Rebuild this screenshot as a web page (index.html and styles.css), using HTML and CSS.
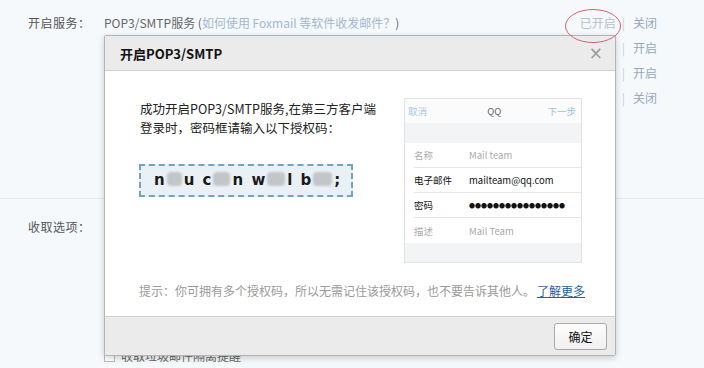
FILE: index.html
```html
<!DOCTYPE html>
<html lang="zh-CN">
<head>
<meta charset="utf-8">
<title>开启POP3/SMTP</title>
<link rel="stylesheet" href="styles.css">
</head>
<body>
<div class="page">
  <section class="services">
    <div class="label">开启服务：</div>
    <div class="service-list">
      <div class="service-row">
        <div class="service-name">POP3/SMTP服务 (<a class="help" href="#">如何使用 Foxmail 等软件收发邮件？</a>)</div>
        <div class="actions"><span class="status">已开启</span><span class="sep">|</span><a class="act" href="#">关闭</a></div>
      </div>
      <div class="service-row">
        <div class="service-name"></div>
        <div class="actions"><span class="status"></span><span class="sep">|</span><a class="act" href="#">开启</a></div>
      </div>
      <div class="service-row">
        <div class="service-name"></div>
        <div class="actions"><span class="status"></span><span class="sep">|</span><a class="act" href="#">开启</a></div>
      </div>
      <div class="service-row">
        <div class="service-name"></div>
        <div class="actions"><span class="status"></span><span class="sep">|</span><a class="act" href="#">关闭</a></div>
      </div>
    </div>
  </section>
  <section class="receive">
    <div class="label">收取选项：</div>
    <div class="receive-list">
      <div class="check-row"><span class="box"></span>收取垃圾邮件隔离提醒</div>
    </div>
  </section>
</div>

<svg class="mark" width="60" height="36" viewBox="0 0 60 36"><ellipse cx="29" cy="18" rx="27.5" ry="16.5" fill="none" stroke="#d9606c" stroke-width="1"/></svg>

<div class="dialog">
  <div class="dlg-head">
    <span class="dlg-title">开启POP3/SMTP</span>
    <span class="dlg-close">×</span>
  </div>
  <div class="dlg-body">
    <div class="dlg-main">
      <div class="dlg-text">
        <p class="intro">成功开启POP3/SMTP服务,在第三方客户端<br>登录时，密码框请输入以下授权码：</p>
        <div class="code">n<span class="blur b1"></span>u c<span class="blur b2"></span>n w<span class="blur b3"></span>l b<span class="blur b4"></span>;</div>
      </div>
      <div class="phone">
        <div class="ph-bar"><span class="ph-cancel">取消</span><span class="ph-title">QQ</span><span class="ph-next">下一步</span></div>
        <div class="ph-band"></div>
        <div class="ph-rows">
          <div class="ph-row dim"><span class="k">名称</span><span class="v">Mail team</span></div>
          <div class="ph-row"><span class="k">电子邮件</span><span class="v">mailteam@qq.com</span></div>
          <div class="ph-row"><span class="k">密码</span><span class="v dots">●●●●●●●●●●●●●●●●</span></div>
          <div class="ph-row dim last"><span class="k">描述</span><span class="v">Mail Team</span></div>
        </div>
        <div class="ph-band bottom"></div>
      </div>
    </div>
    <p class="tip">提示：你可拥有多个授权码，所以无需记住该授权码，也不要告诉其他人。<a class="more" href="#">了解更多</a></p>
  </div>
  <div class="dlg-foot">
    <button class="ok">确定</button>
  </div>
</div>
</body>
</html>
```

FILE: styles.css
```css
* { box-sizing: border-box; }
html, body { margin: 0; padding: 0; }
body {
  width: 704px;
  height: 368px;
  overflow: hidden;
  background: #f5f9fc;
  font-family: "Noto Sans CJK SC", "Noto Sans", sans-serif;
  font-size: 12px;
  color: #555;
  position: relative;
}
a { text-decoration: none; }
p { margin: 0; }

.page { padding-left: 28px; }

.services {
  display: flex;
  padding-top: 10px;
  height: 199px;
  border-bottom: 1px solid #e4e9ee;
  margin-left: -28px;
  padding-left: 28px;
}
.label {
  width: 76px;
  line-height: 25px;
  color: #555;
  letter-spacing: 0.5px;
}
.service-list { width: 553px; }
.service-row {
  display: flex;
  justify-content: space-between;
  height: 25px;
  line-height: 25px;
}
.service-name { color: #666; }
.help { color: #a3b7cf; }
.actions { display: flex; }
.status { width: 36px; text-align: right; color: #b8c0c9; }
.sep { color: #c9d0d8; margin: 0 8px 0 6px; }
.act { color: #97a8ba; width: 24px; }

.receive {
  display: flex;
  padding-top: 15px;
}
.receive-list { padding-top: 134px; }
.check-row {
  display: flex;
  align-items: center;
  line-height: 16px;
  color: #666;
}
.box {
  width: 11px;
  height: 11px;
  border: 1px solid #bbb;
  background: #fff;
  margin-right: 6px;
}

.mark {
  position: absolute;
  left: 564px;
  top: 8px;
  z-index: 3;
}

.dialog {
  position: absolute;
  left: 104px;
  top: 35px;
  width: 512px;
  height: 321px;
  border: 1px solid #b3b3b3;
  border-radius: 2px;
  background: #fff;
  box-shadow: 0 2px 6px rgba(0,0,0,0.18);
  display: flex;
  flex-direction: column;
  z-index: 2;
}
.dlg-head {
  height: 35px;
  background: #ebebeb;
  border-bottom: 1px solid #cfcfcf;
  display: flex;
  align-items: center;
  justify-content: space-between;
  padding: 0 12px 0 15px;
}
.dlg-title {
  font-weight: bold;
  font-size: 13px;
  color: #111;
}
.dlg-close {
  font-family: "DejaVu Sans", sans-serif;
  font-size: 17px;
  color: #999;
  line-height: 1;
}
.dlg-body {
  flex: 1;
  padding: 28px 0 0 35px;
}
.dlg-main { display: flex; }
.dlg-text { width: 264px; }
.intro {
  font-size: 12.5px;
  line-height: 19px;
  color: #222;
}
.code {
  margin-top: 27px;
  margin-left: -1px;
  width: 214px;
  height: 33px;
  border: 2px dashed #6fa5bd;
  background: #e9f1f6;
  font-family: "DejaVu Sans", sans-serif;
  font-weight: bold;
  font-size: 15px;
  color: #1a1a1a;
  line-height: 29px;
  padding-left: 13px;
  white-space: nowrap;
  word-spacing: 3px;
}
.blur {
  display: inline-block;
  height: 14px;
  background: #c3c6c9;
  border-radius: 4px;
  vertical-align: -1px;
  filter: blur(1px);
  margin: 0 2px;
}
.b1 { width: 15px; }
.b2 { width: 17px; }
.b3 { width: 18px; }
.b4 { width: 19px; }

.phone {
  margin-top: -1px;
  width: 178px;
  height: 165px;
  border: 1px solid #e2e2e2;
  background: #fff;
  font-size: 9.5px;
}
.ph-bar {
  height: 24px;
  display: flex;
  align-items: center;
  justify-content: space-between;
  padding: 0 5px 0 3px;
  background: #fbfbfc;
}
.ph-cancel { color: #a8c8e4; }
.ph-title { color: #666; margin-left: 14px; }
.ph-next { color: #9cc0e0; }
.ph-band { height: 20px; background: #f3f4f6; }
.ph-band.bottom { height: 19px; }
.ph-rows { padding-left: 9px; background: #fff; }
.ph-row {
  height: 25px;
  display: flex;
  align-items: center;
  border-bottom: 1px solid #e6e6e6;
  color: #111;
}
.ph-row.last { border-bottom: none; }
.ph-row .k { width: 55px; }
.ph-row.dim { color: #aaa; }
.dots { font-size: 6px; letter-spacing: 0; }

.tip {
  margin-top: 19px;
  margin-left: -1px;
  font-size: 12px;
  color: #9a9a9a;
  line-height: 18px;
}
.more {
  color: #2a5d9f;
  text-decoration: underline;
  margin-left: 2px;
}

.dlg-foot {
  height: 39px;
  background: #ebebeb;
  border-top: 1px solid #cfcfcf;
  display: flex;
  align-items: center;
  justify-content: flex-end;
  padding-right: 8px;
}
.ok {
  width: 53px;
  height: 27px;
  border: 1px solid #a9a9a9;
  border-radius: 3px;
  background: linear-gradient(#fdfdfd, #f0f0f0);
  font-family: "Noto Sans CJK SC", sans-serif;
  font-size: 12px;
  color: #111;
  padding: 0;
}
```
